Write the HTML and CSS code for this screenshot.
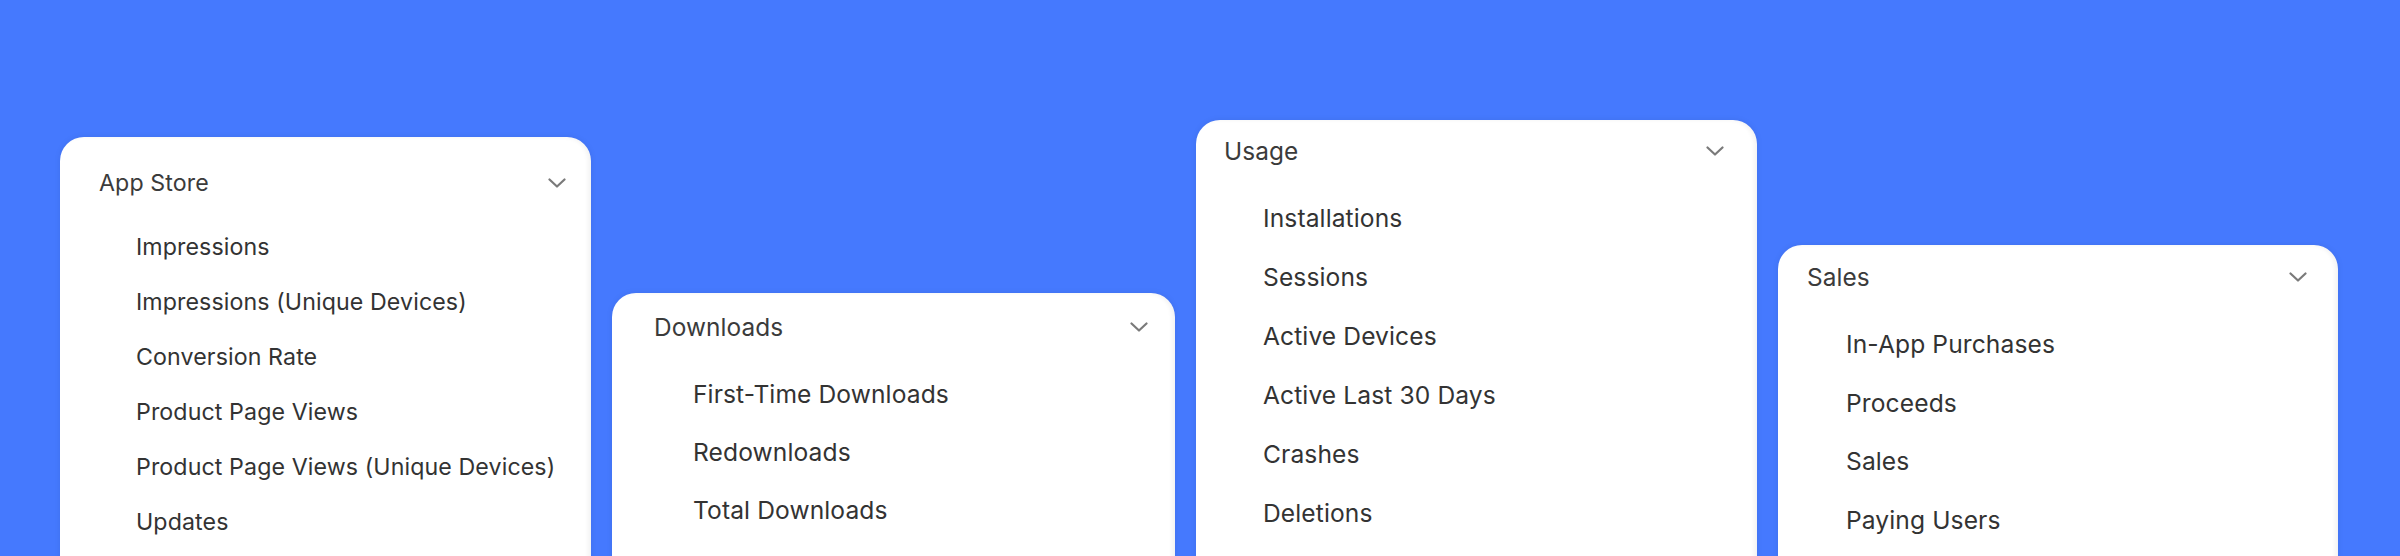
FILE: index.html
```html
<!DOCTYPE html>
<html lang="en">
<head>
<meta charset="utf-8">
<title>Metrics menus</title>
<link rel="stylesheet" href="styles.css">
</head>
<body>
<main class="stage">
  <section class="card card--store">
    <div class="card-head">
      <span class="card-title">App Store</span>
      <svg class="chev" viewBox="0 0 18 10" width="18" height="10"><polyline points="1.5,1.5 9,8.5 16.5,1.5"/></svg>
    </div>
    <ul class="card-list">
      <li class="card-item">Impressions</li>
      <li class="card-item">Impressions (Unique Devices)</li>
      <li class="card-item">Conversion Rate</li>
      <li class="card-item">Product Page Views</li>
      <li class="card-item">Product Page Views (Unique Devices)</li>
      <li class="card-item">Updates</li>
    </ul>
  </section>
  <section class="card card--downloads">
    <div class="card-head">
      <span class="card-title">Downloads</span>
      <svg class="chev" viewBox="0 0 18 10" width="18" height="10"><polyline points="1.5,1.5 9,8.5 16.5,1.5"/></svg>
    </div>
    <ul class="card-list">
      <li class="card-item">First-Time Downloads</li>
      <li class="card-item">Redownloads</li>
      <li class="card-item">Total Downloads</li>
    </ul>
  </section>
  <section class="card card--usage">
    <div class="card-head">
      <span class="card-title">Usage</span>
      <svg class="chev" viewBox="0 0 18 10" width="18" height="10"><polyline points="1.5,1.5 9,8.5 16.5,1.5"/></svg>
    </div>
    <ul class="card-list">
      <li class="card-item">Installations</li>
      <li class="card-item">Sessions</li>
      <li class="card-item">Active Devices</li>
      <li class="card-item">Active Last 30 Days</li>
      <li class="card-item">Crashes</li>
      <li class="card-item">Deletions</li>
    </ul>
  </section>
  <section class="card card--sales">
    <div class="card-head">
      <span class="card-title">Sales</span>
      <svg class="chev" viewBox="0 0 18 10" width="18" height="10"><polyline points="1.5,1.5 9,8.5 16.5,1.5"/></svg>
    </div>
    <ul class="card-list">
      <li class="card-item">In-App Purchases</li>
      <li class="card-item">Proceeds</li>
      <li class="card-item">Sales</li>
      <li class="card-item">Paying Users</li>
    </ul>
  </section>
</main>
</body>
</html>
```
FILE: styles.css
```css
* { box-sizing: border-box; }

html, body {
  margin: 0;
  padding: 0;
  height: 556px;
  overflow: hidden;
}

body {
  background: #4579fe;
  font-family: Inter, "Noto Sans", "Liberation Sans", sans-serif;
  -webkit-font-smoothing: antialiased;
}

.stage {
  display: flex;
  align-items: flex-start;
  gap: 21px;
  padding-left: 60px;
}

.card {
  background: #ffffff;
  border-radius: 24px;
  padding-top: var(--pt);
  padding-bottom: 80px;
  box-shadow: inset -3px 0 4px rgba(0, 0, 0, 0.05), 0 0 6px rgba(0, 0, 0, 0.08);
  flex: none;
}

.card-head {
  display: flex;
  align-items: center;
  justify-content: space-between;
  height: var(--hh);
  padding-left: var(--tl);
  padding-right: var(--cr);
}

.card-title {
  font-size: var(--fs-title);
  color: #3b3b3b;
  letter-spacing: 0.1px;
}

.chev {
  display: block;
  fill: none;
  stroke: #7a7a7a;
  stroke-width: 2.2;
  stroke-linecap: round;
  stroke-linejoin: round;
}

.card-list {
  list-style: none;
  margin: var(--lm) 0 0 0;
  padding: 0 0 0 var(--il);
}

.card-item {
  display: flex;
  align-items: center;
  height: var(--row);
  font-size: var(--fs-item);
  color: #333333;
  letter-spacing: 0.1px;
}

.card--store {
  width: 531px;
  margin-top: 137px;
  --pt: 19px;
  --hh: 54px;
  --lm: 9px;
  --row: 55px;
  --tl: 39px;
  --il: 76px;
  --cr: 25px;
  --fs-title: 23.2px;
  --fs-item: 23.2px;
}

.card--downloads {
  width: 563px;
  margin-top: 293px;
  --pt: 0px;
  --hh: 67px;
  --lm: 5px;
  --row: 58px;
  --tl: 42px;
  --il: 81px;
  --cr: 27px;
  --fs-title: 24.4px;
  --fs-item: 24.6px;
}

.card--usage {
  width: 561px;
  margin-top: 120px;
  --pt: 0px;
  --hh: 62px;
  --lm: 6px;
  --row: 59px;
  --tl: 28px;
  --il: 67px;
  --cr: 33px;
  --fs-title: 24.4px;
  --fs-item: 24.6px;
}

.card--sales {
  width: 560px;
  margin-top: 245px;
  --pt: 0px;
  --hh: 63px;
  --lm: 7px;
  --row: 58.5px;
  --tl: 29px;
  --il: 68px;
  --cr: 31px;
  --fs-title: 24.4px;
  --fs-item: 24.6px;
}
```
